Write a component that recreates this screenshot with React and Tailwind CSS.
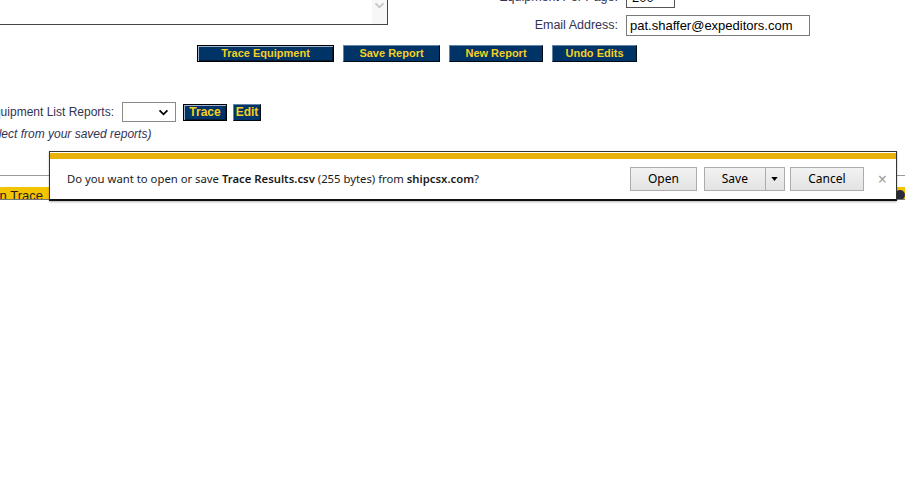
import React from 'react';

const navyBtn =
  'h-[17px] flex items-center justify-center bg-[#003366] text-[#f5cf22] font-bold text-[11px] leading-none border border-t-[#6283a8] border-l-[#6283a8] border-b-[#000a14] border-r-[#000a14]';
const focusBtn =
  'h-[17px] flex items-center justify-center bg-[#003366] text-[#f5cf22] font-bold text-[11px] leading-none border border-black shadow-[inset_1px_1px_0_#9fb3cc,inset_-1px_-1px_0_#0a1c33]';

const dlgBtn =
  'h-[24px] flex items-center justify-center border border-[#acacac] bg-gradient-to-b from-[#f2f2f2] to-[#e3e3e3] text-[12px] text-black';

const Chevron = ({ className }) => (
  <svg viewBox="0 0 12 8" className={className} fill="none">
    <path d="M1.5 1.5 L6 6 L10.5 1.5" stroke="currentColor" strokeWidth="2" />
  </svg>
);

const Caret = ({ className }) => (
  <svg viewBox="0 0 8 5" className={className}>
    <path d="M0 0 H8 L4 5 Z" fill="currentColor" />
  </svg>
);

const DownloadBar = () => (
  <div className="absolute left-[49px] top-[151px] w-[848px] h-[50px] bg-white border border-[#333] border-b-2 border-b-[#111] shadow-[0_1px_2px_rgba(0,0,0,0.3)]">
    <div className="mt-[1px] h-[6px] bg-[#e9b10c]" />
    <div className="flex items-center h-[40px] pl-[17px] pr-[9px] font-['Noto_Sans',sans-serif]">
      <p className="text-[11.3px] text-[#1a1a1a] whitespace-nowrap">
        Do you want to open or save <b className="font-semibold">Trace Results.csv</b> (255 bytes) from{' '}
        <b className="font-semibold">shipcsx.com</b>?
      </p>
      <div className="ml-auto flex items-center">
        <button className={`${dlgBtn} w-[67px]`}>Open</button>
        <div className="ml-[7px] flex">
          <button className={`${dlgBtn} w-[62px]`}>Save</button>
          <button className={`${dlgBtn} w-[19px] border-l-0`}>
            <Caret className="w-[7px] h-[4px] text-black" />
          </button>
        </div>
        <button className={`${dlgBtn} ml-[5px] w-[74px]`}>Cancel</button>
        <span className="ml-[14px] text-[16px] leading-none text-[#9a9a9a]">×</span>
      </div>
    </div>
  </div>
);

export default function App() {
  return (
    <div className="relative w-[905px] h-[480px] bg-white overflow-hidden font-['Liberation_Sans',Arial,sans-serif] text-[12px] text-[#333355]">
      <div className="-ml-[15px] w-[920px]">
        {/* top form area */}
        <div className="-mt-[20px] flex items-start">
          <div className="w-[403px] h-[45px] border border-[#444] bg-white flex justify-end">
            <div className="w-[15px] h-full bg-[#f7f7f7] flex justify-center pt-[21px]">
              <Chevron className="w-[11px] h-[7px] text-[#c4c4c4]" />
            </div>
          </div>
          <div className="pt-[7px] grid grid-cols-[230px_auto] gap-x-[8px] gap-y-[7px] items-center">
            <label className="text-right text-[12.5px] whitespace-nowrap">Equipment Per Page:</label>
            <div className="w-[49px] h-[21px] border border-[#555] flex items-center justify-between px-[5px] text-[13px] text-black">
              <span>200</span>
              <Caret className="w-[7px] h-[4px] text-black" />
            </div>
            <label className="text-right text-[12.5px] whitespace-nowrap">Email Address:</label>
            <div className="w-[184px] h-[21px] border border-[#7a7a7a] flex items-center pl-[3px] text-[13px] text-black">
              pat.shaffer@expeditors.com
            </div>
          </div>
        </div>

        {/* action buttons */}
        <div className="mt-[9px] pl-[212px] flex gap-[9px]">
          <button className={`${focusBtn} w-[137px]`}>Trace Equipment</button>
          <button className={`${navyBtn} w-[97px]`}>Save Report</button>
          <button className={`${navyBtn} w-[94px]`}>New Report</button>
          <button className={`${navyBtn} w-[85px]`}>Undo Edits</button>
        </div>

        {/* saved reports */}
        <div className="mt-[40px] flex items-center h-[20px]">
          <label className="w-[129px] text-right whitespace-nowrap">Equipment List Reports:</label>
          <div className="ml-[8px] w-[54px] h-[20px] border border-[#8a8a8a] flex items-center justify-end pr-[6px]">
            <Chevron className="w-[11px] h-[7px] text-black" />
          </div>
          <button className={`${focusBtn} ml-[7px] w-[44px] h-[16px] text-[12px]`}>Trace</button>
          <button className={`${navyBtn} ml-[6px] w-[28px] h-[16px] text-[12px]`}>Edit</button>
        </div>
        <p className="mt-[5px] -ml-[3px] leading-[15px] italic whitespace-nowrap">(select from your saved reports)</p>

        {/* results header, partly covered */}
        <div className="mt-[33px] h-px bg-[#9a9a9a]" />
        <div className="mt-[11px] h-[13px] bg-[#f5c400] overflow-hidden flex justify-between border-b border-[#777]">
          <span className="-ml-[2px] text-[13px] leading-[17px] text-[#222] whitespace-nowrap">Run Trace</span>
          <span className="mt-[3px] w-[10px] h-[10px] rounded-full bg-[#2a2a3a]" />
        </div>
      </div>

      <DownloadBar />
    </div>
  );
}
